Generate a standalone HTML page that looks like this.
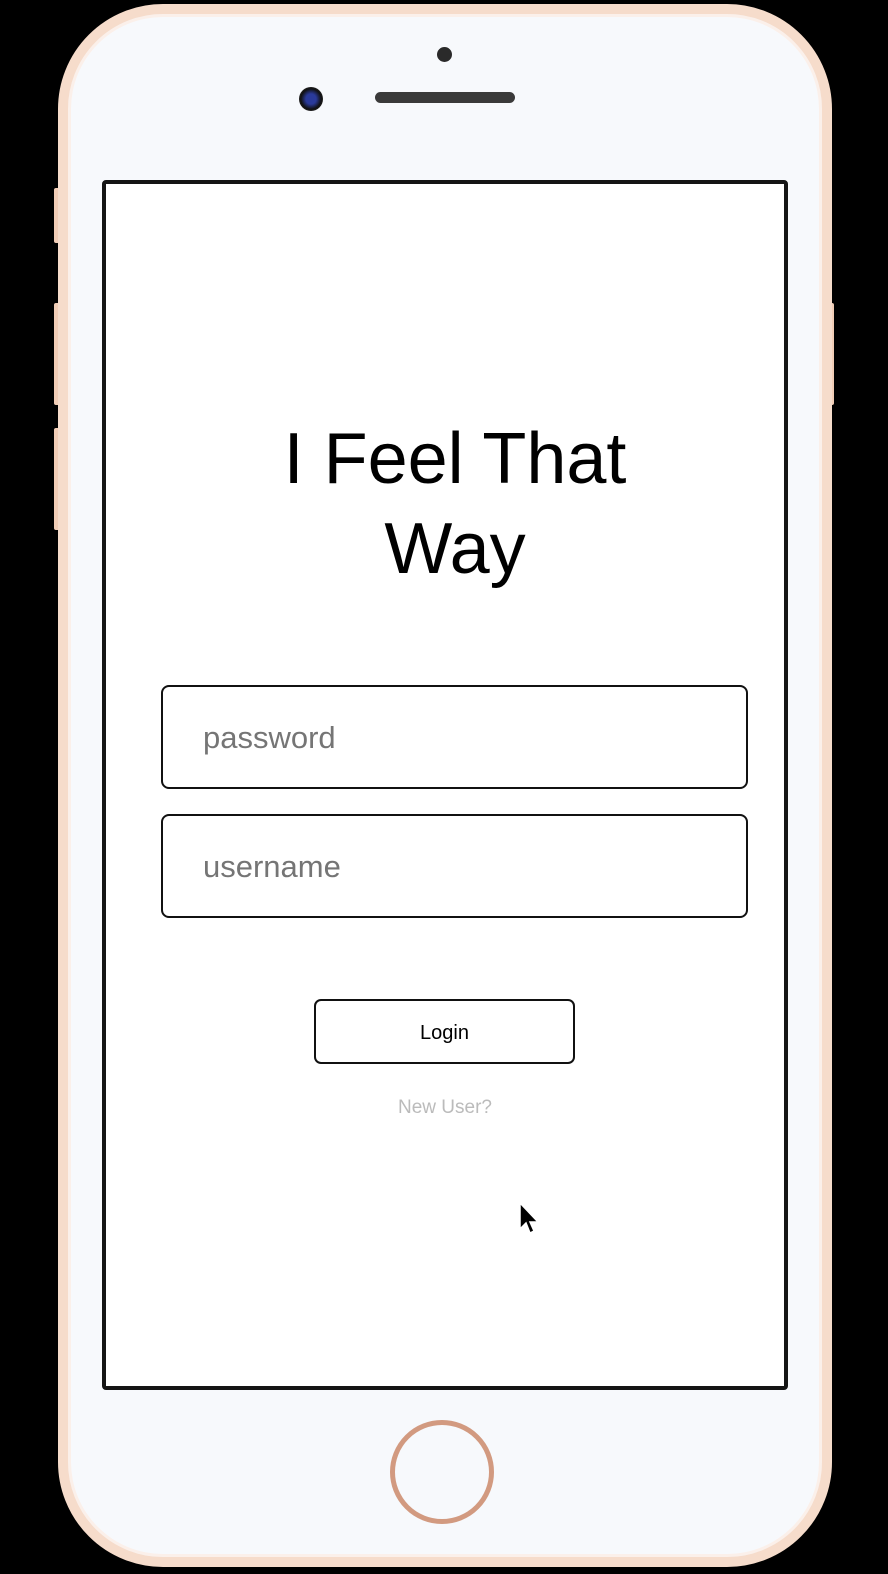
<!DOCTYPE html>
<html><head><style>
body{margin:0;width:888px;height:1574px;background:#000;position:relative;overflow:hidden;font-family:"Liberation Sans",sans-serif}
.phone{position:absolute;left:58px;top:4px;width:774px;height:1563px;box-sizing:border-box;border-radius:105px;background:#f7f9fc;border:10px solid #f6dccb;box-shadow:inset 0 0 0 3px #fbf0ea}
.btn{position:absolute;background:#f1cdb6;border-radius:2px}
.screen{position:absolute;left:102px;top:180px;width:686px;height:1210px;box-sizing:border-box;border:4px solid #151515;border-radius:4px;background:#fff}
.inp{position:absolute;left:161px;width:587px;height:104px;box-sizing:border-box;border:2px solid #111;border-radius:8px;color:#757575;font-size:31px;padding-left:40px;line-height:102px}
</style></head><body>
<div class="btn" style="left:54px;top:188px;width:6px;height:55px"></div>
<div class="btn" style="left:54px;top:303px;width:6px;height:102px"></div>
<div class="btn" style="left:54px;top:428px;width:6px;height:102px"></div>
<div class="btn" style="left:828px;top:303px;width:6px;height:102px"></div>
<div class="phone"></div>
<div style="position:absolute;left:437px;top:47px;width:15px;height:15px;border-radius:50%;background:#2a2a2a"></div>
<div style="position:absolute;left:375px;top:92px;width:140px;height:11px;border-radius:6px;background:#3a3a3a"></div>
<div style="position:absolute;left:299px;top:87px;width:24px;height:24px;border-radius:50%;background:radial-gradient(#2a3a9a 30%,#111 60%,#444)"></div>
<div style="position:absolute;left:390px;top:1420px;width:104px;height:104px;box-sizing:border-box;border-radius:50%;border:5px solid #d29a80"></div>
<div class="screen"></div>
<div style="position:absolute;left:102px;width:706px;top:414px;text-align:center;font-size:72px;line-height:90px;color:#000">I Feel That<br>Way</div>
<div class="inp" style="top:685px">password</div>
<div class="inp" style="top:814px">username</div>
<div style="position:absolute;left:314px;top:999px;width:261px;height:65px;box-sizing:border-box;border:2px solid #111;border-radius:7px;text-align:center;line-height:64px;font-size:20px">Login</div>
<div style="position:absolute;left:345px;width:200px;top:1097px;text-align:center;font-size:19px;color:#bbb">New User?</div>
<svg style="position:absolute;left:518px;top:1202px" width="24" height="36" viewBox="0 0 24 36"><path d="M2 1 L2 27 L8 21 L12 31 L16 29 L12 20 L20 20 Z" fill="#000" stroke="#fff" stroke-width="1.5"/></svg>
</body></html>
